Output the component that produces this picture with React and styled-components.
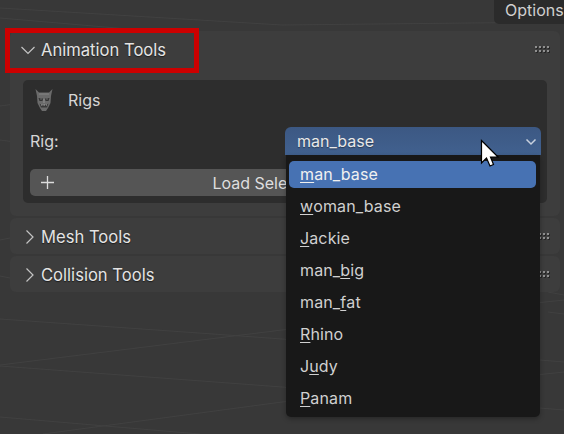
import React from 'react';
import styled, { createGlobalStyle } from 'styled-components';

const Global = createGlobalStyle`
  html, body { margin: 0; padding: 0; background: #383838; }
  * { box-sizing: border-box; }
`;

const Page = styled.div`
  position: relative;
  width: 564px;
  height: 434px;
  overflow: hidden;
  background: #383838;
  font-family: Inter, "Noto Sans", sans-serif;
  font-size: 16px;
  color: #dcdcdc;
`;
const Waves = styled.svg`
  position: absolute;
  inset: 0;
  width: 564px;
  height: 434px;
`;
const Content = styled.div`
  position: relative;
  display: flex;
  flex-direction: column;
  padding-right: 4px;
  padding-left: 10px;
`;
const TopBar = styled.div`
  display: flex;
  justify-content: flex-end;
  height: 24px;
  margin: 0 -4px 7px 0;
`;
const OptionsTab = styled.div`
  width: 70px;
  height: 24px;
  padding: 0 0 0 11px;
  background: #2b2b2b;
  border-radius: 0 0 0 5px;
  color: #d0d0d0;
  line-height: 20px;
  white-space: nowrap;
  overflow: hidden;
`;
const Panel = styled.section`
  background: #3d3d3d;
  border-radius: 6px;
  margin-bottom: ${p => p.$gap}px;
  padding-bottom: ${p => (p.$open ? 13 : 0)}px;
`;
const PanelHeader = styled.div`
  display: flex;
  align-items: center;
  height: ${p => p.$h}px;
  margin-bottom: ${p => p.$after || 0}px;
  padding: ${p => p.$top || 0}px 11px 0 11px;
  gap: 6px;
  font-size: 16.6px;
  color: #e4e4e4;
  text-shadow: 0 1px 1px rgba(0, 0, 0, 0.55);
`;
const Chevron = styled.svg`
  width: 14px;
  height: 14px;
  flex: none;
  fill: none;
  stroke: #c4c4c4;
  stroke-width: 1.2;
`;
const Title = styled.span`
  flex: 1;
`;
const Grip = styled.div`
  display: grid;
  grid-template-columns: repeat(4, 2px);
  grid-auto-rows: 2px;
  gap: 2px 2px;
  margin-bottom: 2px;
  & > i { background: #8f8f8f; box-shadow: 1px 1px 0 #262626; }
`;
const SubPanel = styled.div`
  margin: 0 13px;
  height: 123px;
  background: #2d2d2d;
  border-radius: 5px;
  padding: 0 7px;
  display: flex;
  flex-direction: column;
`;
const SubHeader = styled.div`
  display: flex;
  align-items: center;
  gap: 15px;
  height: 40px;
  padding-left: 5px;
  color: #d6d6d6;
`;
const Row = styled.div`
  display: flex;
  align-items: center;
  justify-content: space-between;
  height: 28px;
  margin-top: 7px;
`;
const Label = styled.span`
  color: #d6d6d6;
`;
const Select = styled.div`
  position: relative;
  width: 256px;
  height: 28px;
  margin-right: -1px;
  padding-left: 12px;
  display: flex;
  align-items: center;
  justify-content: space-between;
  background: linear-gradient(#3c5883, #41618f);
  border-radius: 6px 6px 0 0;
  color: #e8e8e8;
  text-shadow: 0 1px 1px rgba(0, 0, 0, 0.4);
`;
const SelectChevron = styled.svg`
  width: 12px;
  height: 12px;
  margin: 2px 4px 0 0;
  fill: none;
  stroke: #c9d1de;
  stroke-width: 1.5;
`;
const Button = styled.div`
  position: relative;
  margin-top: 14px;
  height: 27px;
  background: #555;
  border-radius: 5px;
  display: flex;
  align-items: center;
  justify-content: center;
  color: #dedede;
`;
const PlusIcon = styled.svg`
  position: absolute;
  left: 10px;
  top: 6px;
  width: 15px;
  height: 15px;
  stroke: #dcdcdc;
  stroke-width: 1.3;
`;
const Popup = styled.div`
  position: absolute;
  left: 286px;
  top: 155px;
  width: 254px;
  height: 262px;
  padding: 6px 4px 0 3px;
  background: #181818;
  border-radius: 0 0 5px 5px;
  box-shadow: 0 2px 5px rgba(0, 0, 0, 0.3);
  display: flex;
  flex-direction: column;
`;
const Item = styled.div`
  height: ${p => (p.$active ? 27 : 32)}px;
  margin-bottom: ${p => (p.$active ? 5 : 0)}px;
  padding: 0 0 ${p => (p.$active ? 2 : 7)}px 11px;
  display: flex;
  align-items: center;
  border-radius: 5px;
  background: ${p => (p.$active ? '#4772b3' : 'transparent')};
  color: ${p => (p.$active ? '#f0f0f0' : '#d0d0d0')};
  letter-spacing: 0.12px;
  white-space: pre;
`;
const Key = styled.span`
  text-decoration: underline;
  text-decoration-thickness: 1px;
  text-underline-offset: 2px;
`;
const Highlight = styled.div`
  position: absolute;
  left: 5px;
  top: 28px;
  width: 194px;
  height: 45px;
  border: 5px solid #cc0000;
`;
const Cursor = styled.svg`
  position: absolute;
  left: 480px;
  top: 139px;
  width: 20px;
  height: 29px;
`;

const chevronDown = 'M0.5 4 L7 10.5 L13.5 4';
const chevronRight = 'M5.5 0.5 L12 7 L5.5 13.5';

function GripDots() {
  return <Grip>{Array.from({ length: 8 }, (_, i) => <i key={i} />)}</Grip>;
}

function Mask() {
  return (
    <svg width="18" height="24" viewBox="0 0 18 24">
      <path d="M0.5 1 L4 4.5 H14 L17.5 1 L16 8 L15.5 15 L13 20 L11 23 H7 L5 20 L2.5 15 L2 8 Z" fill="#6b6b6b" />
      <path d="M4 6 H14" stroke="#858585" strokeWidth="1" />
      <path d="M3.5 10 L8 10.5 L7.5 13 H4.5 Z M14.5 10 L10 10.5 L10.5 13 H13.5 Z" fill="#343434" />
      <path d="M5.5 11 H6.5 M11.5 11 H12.5" stroke="#9a9a9a" strokeWidth="1" />
      <path d="M9 11 V15" stroke="#8a8a8a" strokeWidth="1.2" />
      <path d="M4.5 15.5 Q9 19 13.5 15.5 L12 19.5 H6 Z" fill="#3a3a3a" />
      <path d="M6 17 H12" stroke="#a2a2a2" strokeWidth="1" strokeDasharray="1.5 1" />
    </svg>
  );
}

const rigs = [
  ['', 'm', 'an_base'],
  ['', 'w', 'oman_base'],
  ['', 'J', 'ackie'],
  ['man_', 'b', 'ig'],
  ['man_', 'f', 'at'],
  ['', 'R', 'hino'],
  ['J', 'u', 'dy'],
  ['', 'P', 'anam'],
];

const lines = [
  'M0 319 L213 334 L282 339 L564 362',
  'M0 365 L282 330 L564 300',
  'M0 366 L282 387 L564 410',
  'M0 417 L117 427 L200 434',
  'M43 434 L282 402 L564 372',
  'M0 8 L282 25 L564 22',
  'M0 18 L140 30',
  'M0 106 L30 102',
  'M0 140 L30 144',
  'M0 240 L10 238',
  'M0 276 L10 278',
  'M548 292 L564 295',
  'M548 312 L564 314',
];

export default function App() {
  return (
    <Page>
      <Global />
      <Waves viewBox="0 0 564 434">
        {lines.map(d => <path key={d} d={d} fill="none" stroke="#414141" strokeWidth="1" />)}
      </Waves>
      <Content>
        <TopBar><OptionsTab>Options</OptionsTab></TopBar>
        <Panel $open $gap={2}>
          <PanelHeader $h={38} $after={11}>
            <Chevron viewBox="0 0 14 14"><path d={chevronDown} /></Chevron>
            <Title>Animation Tools</Title>
            <GripDots />
          </PanelHeader>
          <SubPanel>
            <SubHeader><Mask /><span>Rigs</span></SubHeader>
            <Row>
              <Label>Rig:</Label>
              <Select>
                man_base
                <SelectChevron viewBox="0 0 12 12"><path d="M1.5 3.5 L6 8 L10.5 3.5" /></SelectChevron>
              </Select>
            </Row>
            <Button>
              <PlusIcon viewBox="0 0 15 15"><path d="M7.5 1 V14 M1 7.5 H14" /></PlusIcon>
              Load Selected Rigs
            </Button>
          </SubPanel>
        </Panel>
        <Panel $gap={2}>
          <PanelHeader $h={36} $top={1}>
            <Chevron viewBox="0 0 14 14"><path d={chevronRight} /></Chevron>
            <Title>Mesh Tools</Title>
            <GripDots />
          </PanelHeader>
        </Panel>
        <Panel $gap={0}>
          <PanelHeader $h={36} $top={1}>
            <Chevron viewBox="0 0 14 14"><path d={chevronRight} /></Chevron>
            <Title>Collision Tools</Title>
            <GripDots />
          </PanelHeader>
        </Panel>
      </Content>
      <Popup>
        {rigs.map(([a, k, b], i) => (
          <Item key={k} $active={i === 0}>{a}<Key>{k}</Key>{b}</Item>
        ))}
      </Popup>
      <Highlight />
      <Cursor viewBox="0 0 20 29">
        <path d="M1.5 1.5 V24 L6.5 19 L10 27 L13.5 25.5 L10.5 18 H18 Z" fill="#fff" stroke="#000" strokeWidth="1.2" />
      </Cursor>
    </Page>
  );
}
